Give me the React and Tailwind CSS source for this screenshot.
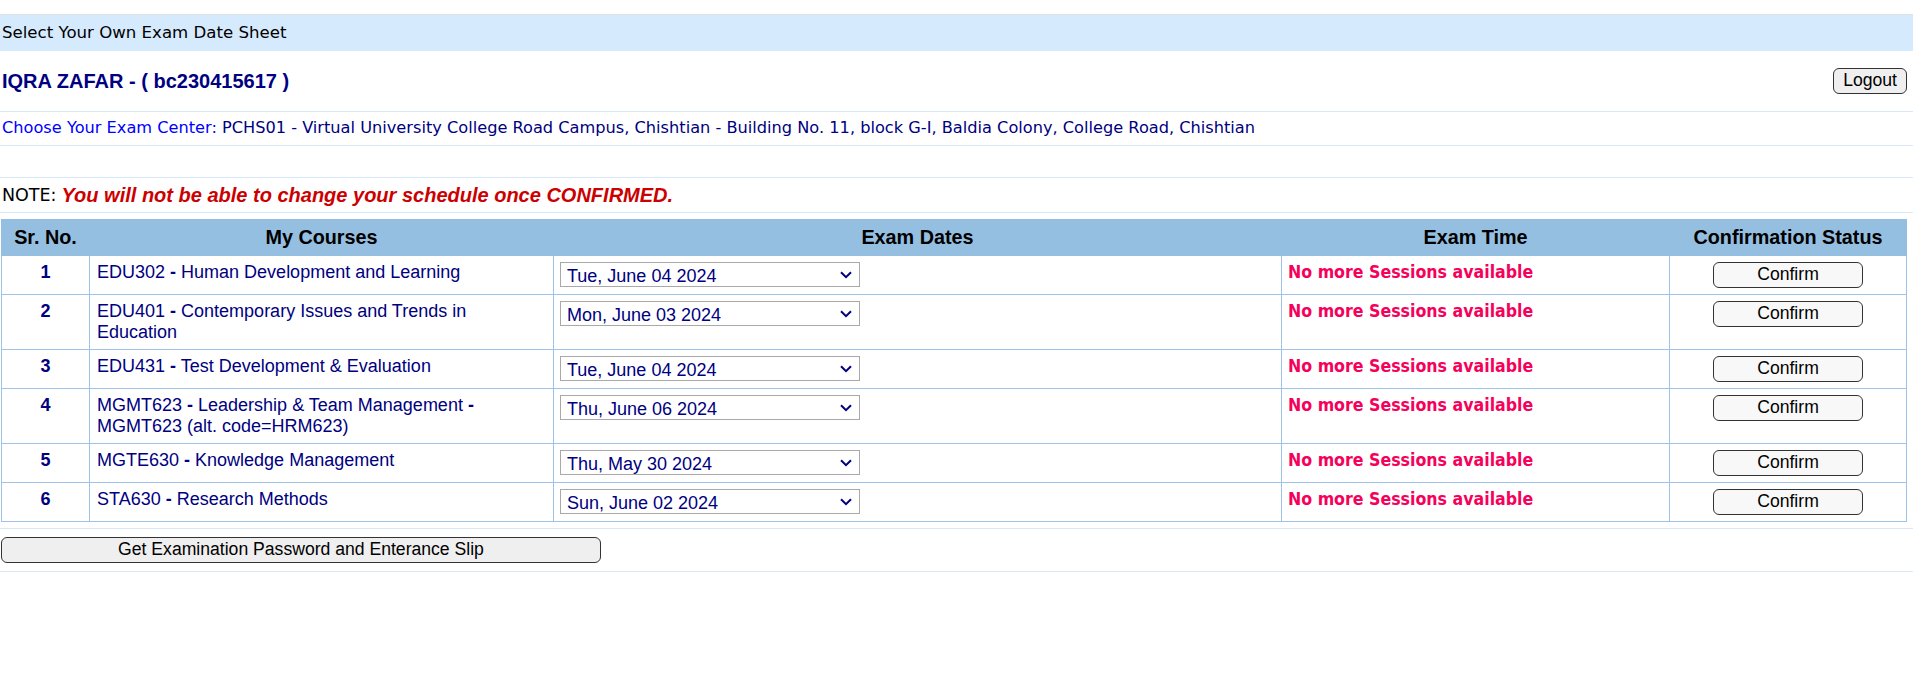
import { useState } from "react";

const courses = [
  { no: 1, code: "EDU302", title: ["Human Development and Learning"], date: "Tue, June 04 2024" },
  { no: 2, code: "EDU401", title: ["Contemporary Issues and Trends in Education"], date: "Mon, June 03 2024" },
  { no: 3, code: "EDU431", title: ["Test Development & Evaluation"], date: "Tue, June 04 2024" },
  { no: 4, code: "MGMT623", title: ["Leadership & Team Management", "MGMT623 (alt. code=HRM623)"], date: "Thu, June 06 2024" },
  { no: 5, code: "MGTE630", title: ["Knowledge Management"], date: "Thu, May 30 2024" },
  { no: 6, code: "STA630", title: ["Research Methods"], date: "Sun, June 02 2024" },
];

// Tahoma look-alikes
const tahoma = "font-['DejaVu_Sans',sans-serif]";
const tahomaBold = "font-['DejaVu_Sans_Condensed','DejaVu_Sans',sans-serif] font-stretch-condensed";

const cell = "border border-[#9dc3e6] py-[6px] align-top leading-[21px]";

const CourseRow = ({ course }) => {
  const [date, setDate] = useState(course.date);

  return (
    <tr>
      <td className={`${cell} px-[7px] text-center font-bold text-[#000080]`}>{course.no}</td>
      <td className={`${cell} px-[7px] text-[#000080]`}>
        {course.code} <b>-</b>{" "}
        {course.title.map((part, i) => (
          <span key={i}>
            {i > 0 && <b> - </b>}
            {part}
          </span>
        ))}
      </td>
      <td className={`${cell} px-[6px]`}>
        <div className="relative w-[300px]">
          <select
            value={date}
            onChange={(e) => setDate(e.target.value)}
            className="block w-[300px] h-[25px] appearance-none border border-[#a9a9a9] bg-white text-[#000080] leading-normal pl-[6px]"
          >
            <option>{course.date}</option>
          </select>
          <svg
            className="pointer-events-none absolute right-[8px] top-[9px]"
            width="12"
            height="8"
            viewBox="0 0 12 8"
            fill="none"
          >
            <path d="M1 1.2 6 6.2 11 1.2" stroke="#000080" strokeWidth="2" />
          </svg>
        </div>
      </td>
      <td className={`${cell} px-[6px] text-[17.6px] font-bold text-[#f5005a] ${tahomaBold}`}>
        No more Sessions available
      </td>
      <td className={`${cell} px-[6px] text-center`}>
        <button className="w-[150px] h-[26px] rounded-[6px] border border-[#333] bg-[#f8f8f8] text-[17.6px] text-black leading-none">
          Confirm
        </button>
      </td>
    </tr>
  );
};

export default function App() {
  return (
    <div className="min-h-screen bg-white pt-[14px] font-['Liberation_Sans',Arial,sans-serif] text-[18px]">
      {/* Page title band */}
      <div className={`h-[37px] border-t border-[#e0e0e0] bg-[#d6eafd] pl-[2px] flex items-center text-[16.6px] text-black ${tahoma}`}>
        Select Your Own Exam Date Sheet
      </div>

      {/* Student name */}
      <div className="h-[61px] border-b border-[#d9e8f7] pl-[2px] pr-[6px] flex items-center justify-between">
        <h1 className="text-[20px] font-bold text-[#000080]">IQRA ZAFAR - ( bc230415617 )</h1>
        <button className="h-[26px] px-[9px] rounded-[6px] border border-[#333] bg-[#efefef] text-[17.6px] text-black leading-none">
          Logout
        </button>
      </div>

      {/* Exam center */}
      <div className={`h-[34px] border-b border-[#d9e8f7] pl-[2px] flex items-center text-[16.2px] ${tahoma}`}>
        <span className="text-[#0000ff]">Choose Your Exam Center:</span>
        <span className="ml-[5px] text-[#000080]">
          PCHS01 - Virtual University College Road Campus, Chishtian - Building No. 11, block G-I, Baldia Colony, College Road, Chishtian
        </span>
      </div>

      <div className="h-[32px] border-b border-[#d9e8f7]"></div>

      {/* Note */}
      <div className="h-[35px] border-b border-[#d9e8f7] pl-[2px] flex items-center">
        <span className={`text-[17.5px] text-black ${tahoma}`}>NOTE:</span>
        <span className="ml-[5px] text-[20px] font-bold italic text-[#cc0000]">
          You will not be able to change your schedule once CONFIRMED.
        </span>
      </div>

      {/* Courses table */}
      <div className="pt-[6px] pb-[6px] border-b border-[#d9e8f7]">
        <table className="ml-px w-[1905px] table-fixed border-collapse border border-[#9dc3e6]">
          <colgroup>
            <col className="w-[88px]" />
            <col className="w-[464px]" />
            <col className="w-[728px]" />
            <col className="w-[388px]" />
            <col className="w-[237px]" />
          </colgroup>
          <thead>
            <tr className="bg-[#94bfe1] text-[19.8px] text-black">
              <th className="h-[36px] border border-[#94bfe1] font-bold">Sr. No.</th>
              <th className="border border-[#94bfe1] font-bold">My Courses</th>
              <th className="border border-[#94bfe1] font-bold">Exam Dates</th>
              <th className="border border-[#94bfe1] font-bold">Exam Time</th>
              <th className="border border-[#94bfe1] font-bold">Confirmation Status</th>
            </tr>
          </thead>
          <tbody>
            {courses.map((course) => (
              <CourseRow key={course.no} course={course} />
            ))}
          </tbody>
        </table>
      </div>

      {/* Slip button */}
      <div className="h-[43px] border-b border-[#d9e8f7] pl-px flex items-center">
        <button className="w-[600px] h-[26px] rounded-[6px] border border-[#333] bg-[#efefef] text-[17.6px] text-black leading-none">
          Get Examination Password and Enterance Slip
        </button>
      </div>
    </div>
  );
}
